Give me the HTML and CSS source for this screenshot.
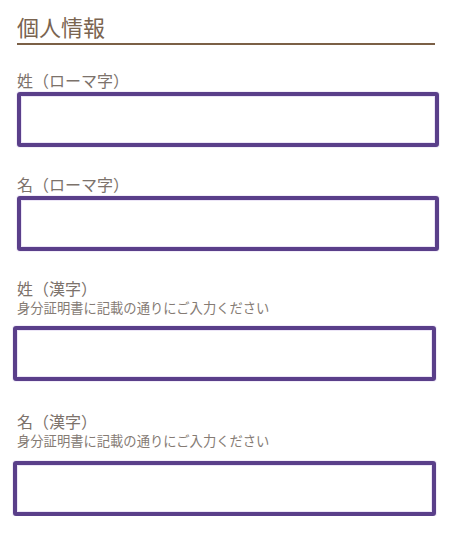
FILE: index.html
```html
<!DOCTYPE html>
<html lang="ja">
<head>
<meta charset="utf-8">
<link rel="stylesheet" href="styles.css">
</head>
<body>
<section class="section">
  <h2 class="section-title">個人情報</h2>
  <div class="field field--first">
    <label class="label">姓（ローマ字）</label>
    <div class="input input--wide"></div>
  </div>
  <div class="field">
    <label class="label">名（ローマ字）</label>
    <div class="input input--wide"></div>
  </div>
  <div class="field">
    <label class="label">姓（漢字）</label>
    <p class="hint">身分証明書に記載の通りにご入力ください</p>
    <div class="input input--kanji"></div>
  </div>
  <div class="field field--last">
    <label class="label">名（漢字）</label>
    <p class="hint">身分証明書に記載の通りにご入力ください</p>
    <div class="input input--kanji"></div>
  </div>
</section>
</body>
</html>
```
FILE: styles.css
```css
html, body {
  margin: 0;
  padding: 0;
  background: #ffffff;
}
body {
  font-family: "Noto Sans CJK JP", "Noto Sans", sans-serif;
}
.section {
  display: flex;
  flex-direction: column;
  padding-top: 11px;
}
.section-title {
  margin: 0 0 0 17px;
  width: 418px;
  font-size: 22px;
  line-height: 30px;
  font-weight: 400;
  color: #7a6450;
  padding-bottom: 2px;
  border-bottom: 2px solid #7b6046;
}
.field {
  display: flex;
  flex-direction: column;
  margin-top: 26px;
}
.field--first {
  margin-top: 24px;
}
.field--last {
  margin-top: 29px;
}
.label {
  display: block;
  margin-left: 17px;
  font-size: 16px;
  line-height: 22px;
  color: #7c726b;
  margin-bottom: 1px;
}
.hint {
  margin: -1px 0 9px 17px;
  font-size: 13.3px;
  line-height: 18px;
  color: #857b74;
}
.field--last .hint {
  margin-bottom: 11px;
}
.input {
  box-sizing: border-box;
  height: 55px;
  background: #ffffff;
  border: 4px solid #5a3f8a;
  border-radius: 3px;
  box-shadow: inset 0 0 0 1px #ece5f7, 0 0 0 1px #f3eef9;
}
.input--wide {
  margin-left: 17px;
  width: 422px;
}
.input--kanji {
  margin-left: 13px;
  width: 423px;
}
```
